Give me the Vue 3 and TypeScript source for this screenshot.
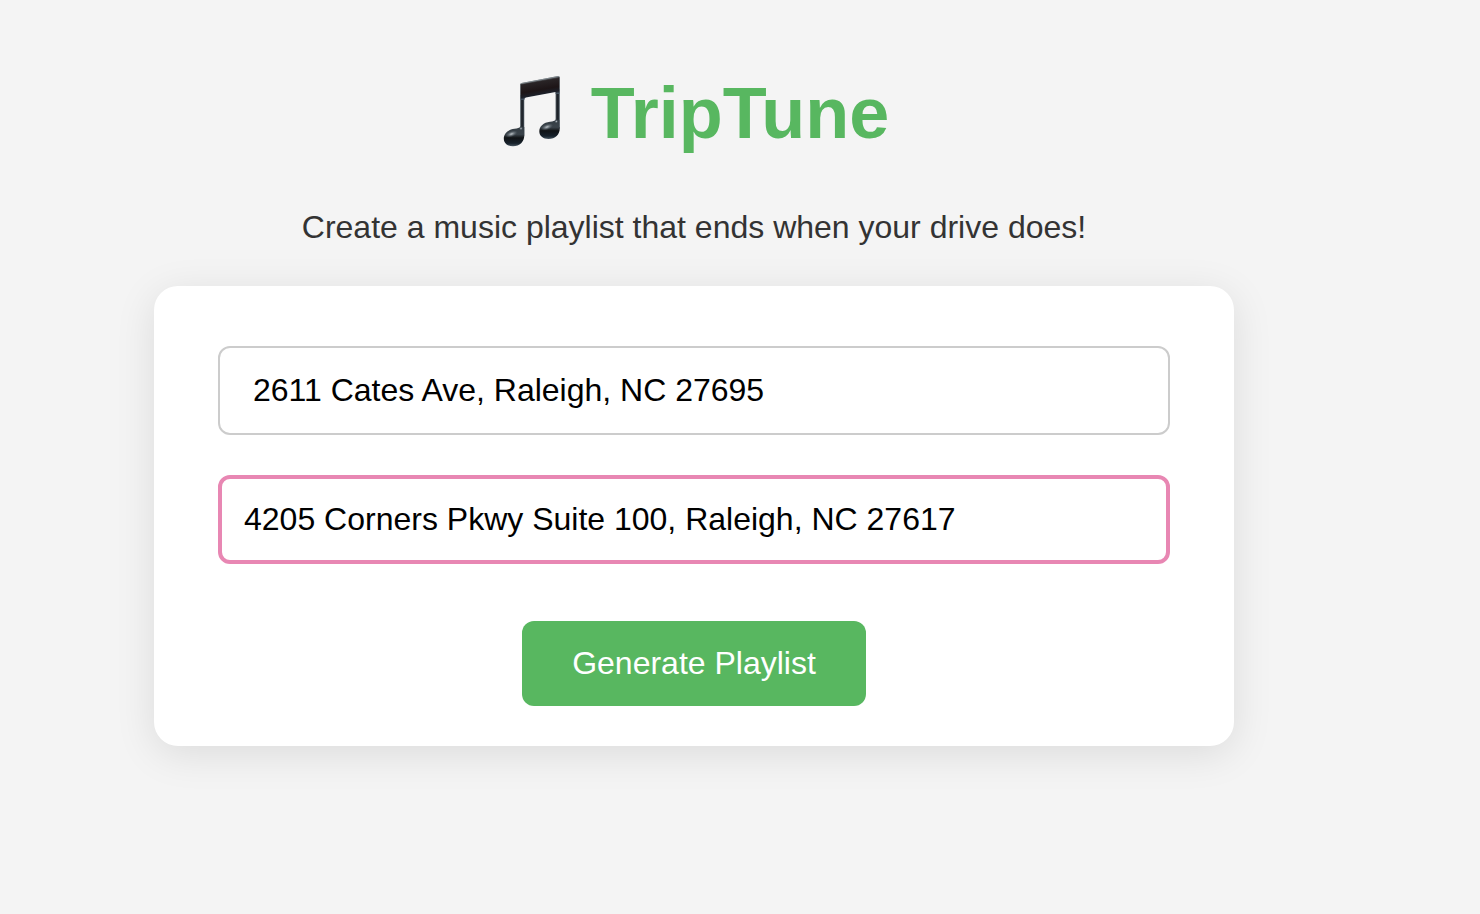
<script setup lang="ts">
import { ref } from 'vue'

const origin = ref('2611 Cates Ave, Raleigh, NC 27695')
const destination = ref('4205 Corners Pkwy Suite 100, Raleigh, NC 27617')
</script>

<template>
  <main class="page">
    <h1 class="title">
      <svg class="note" viewBox="9 10 64 76" aria-hidden="true">
        <defs>
          <linearGradient id="beam" x1="46" y1="15" x2="49" y2="32" gradientUnits="userSpaceOnUse">
            <stop offset="0" stop-color="#687076" />
            <stop offset="0.14" stop-color="#292426" />
            <stop offset="0.6" stop-color="#1d1517" />
            <stop offset="0.86" stop-color="#1c2029" />
            <stop offset="1" stop-color="#4b5a68" />
          </linearGradient>
          <linearGradient id="stem" x1="0" y1="0" x2="1" y2="0">
            <stop offset="0" stop-color="#4c555c" />
            <stop offset="0.4" stop-color="#1b1f25" />
            <stop offset="0.75" stop-color="#262e36" />
            <stop offset="1" stop-color="#6b757c" />
          </linearGradient>
          <linearGradient id="head" x1="0" y1="0" x2="0" y2="1">
            <stop offset="0" stop-color="#343d44" />
            <stop offset="0.4" stop-color="#3a434a" />
            <stop offset="0.58" stop-color="#101316" />
            <stop offset="0.85" stop-color="#16212b" />
            <stop offset="1" stop-color="#46545f" />
          </linearGradient>
          <radialGradient id="shine">
            <stop offset="0" stop-color="#c4cbd0" />
            <stop offset="1" stop-color="#56616a" stop-opacity="0" />
          </radialGradient>
        </defs>
        <path fill="url(#stem)" d="M30.2 30H34.3V71L32 75L30.2 64Z" />
        <path fill="url(#stem)" d="M65.6 24H69.8V63L67.5 67L65.6 57Z" />
        <path fill="url(#head)" d="M30.4 61.5C29.5 63 27.5 63.5 24.5 63.8C18 64.5 13.8 68.5 13.8 73.5C13.8 78.3 17.5 81.2 23 81.2C29.8 81.2 34.3 77 34.3 70V62Z" />
        <path fill="url(#head)" d="M65.8 54.5C64.8 56 63 56.5 60 56.8C53.5 57.5 49.3 61.5 49.3 66.3C49.3 71 53 74 58.5 74C65.3 74 69.8 69.8 69.8 63V55Z" />
        <path fill="url(#beam)" d="M30.2 19.5Q30.2 18.3 31.5 18L68 11.1Q69.8 10.8 69.8 12.8V29H65.6V27L36 32.6Q34.3 33 34.3 35H30.2Z" />
        <path fill="none" stroke="#8a9398" stroke-width="0.8" d="M31 18.6L69 11.4" />
        <path fill="none" stroke="#707a81" stroke-width="0.6" d="M69.5 12.5V62M30.5 19.5V61" />
        <ellipse cx="21.5" cy="69" rx="6.5" ry="3" fill="url(#shine)" transform="rotate(-20 21.5 69)" />
        <ellipse cx="57" cy="62" rx="6.5" ry="3" fill="url(#shine)" transform="rotate(-20 57 62)" />
        <circle cx="31" cy="63.5" r="1.8" fill="url(#shine)" />
        <circle cx="66.3" cy="56.5" r="1.8" fill="url(#shine)" />
      </svg>
      <span>TripTune</span>
    </h1>
    <p class="tagline">Create a music playlist that ends when your drive does!</p>
    <form class="card" @submit.prevent>
      <input v-model="origin" class="field" type="text" aria-label="Starting address" />
      <input v-model="destination" class="field active" type="text" aria-label="Destination address" />
      <button class="generate" type="submit">Generate Playlist</button>
    </form>
  </main>
</template>

<style>
body {
  margin: 0;
  background: #f4f4f4;
}
</style>

<style scoped>
.page {
  box-sizing: border-box;
  display: flex;
  flex-direction: column;
  align-items: center;
  padding: 72px 92px 80px 0;
  font-family: "Liberation Sans", Arial, sans-serif;
  font-size: 32px;
  color: #333;
}

.title {
  display: flex;
  align-items: center;
  gap: 28px;
  margin: 0;
  font-size: 72px;
  line-height: 82px;
  color: #58b760;
}

.note {
  width: 64px;
  height: 76px;
}

.tagline {
  margin: 54px 0 40px;
  line-height: 38px;
  text-align: center;
}

.card {
  box-sizing: border-box;
  display: flex;
  flex-direction: column;
  align-items: center;
  gap: 40px;
  width: 100%;
  max-width: 1080px;
  padding: 60px 64px 40px;
  border-radius: 24px;
  background: #fff;
  box-shadow: 0 8px 40px rgba(0, 0, 0, 0.1);
}

.field {
  box-sizing: border-box;
  width: 100%;
  height: 89px;
  padding: 0 33px;
  border: 2px solid #ccc;
  border-radius: 12px;
  background: #fff;
  font: inherit;
  color: #000;
  outline: none;
}

.field.active {
  padding: 0 22px;
  border: 4px solid #e887b3;
}

.generate {
  margin-top: 17px;
  padding: 24px 50px;
  border: 0;
  border-radius: 12px;
  background: #58b760;
  font: inherit;
  line-height: 37px;
  color: #fff;
  cursor: pointer;
}
</style>
